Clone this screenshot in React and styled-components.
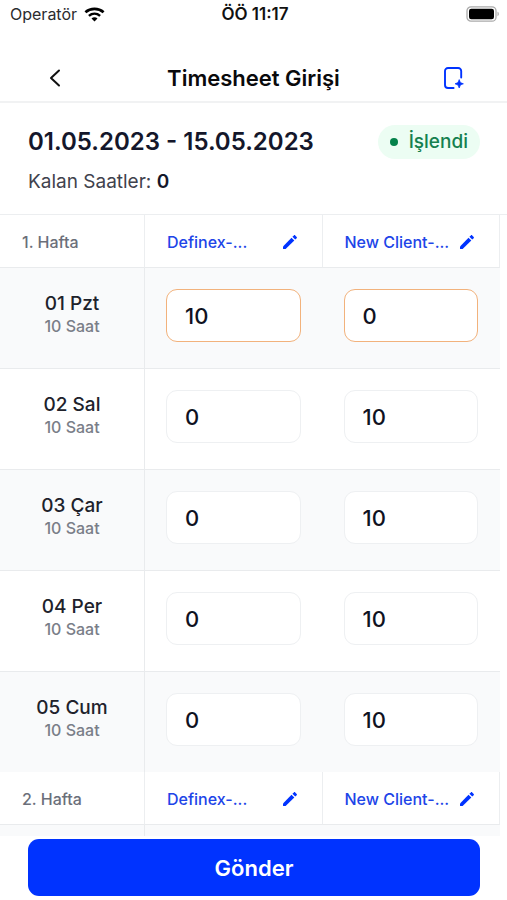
import React, { useState } from "react";
import styled, { createGlobalStyle } from "styled-components";

const GlobalStyle = createGlobalStyle`
  *, *::before, *::after { box-sizing: border-box; }
  body {
    margin: 0;
    background: #fff;
    color: #0f1222;
    font-family: Inter, "Liberation Sans", sans-serif;
  }
  button, input { font: inherit; color: inherit; }
`;

const Screen = styled.div`
  display: flex;
  flex-direction: column;
  min-height: 100vh;
  background: #fff;
`;

const StatusBar = styled.div`
  display: grid;
  grid-template-columns: 1fr auto 1fr;
  align-items: center;
  height: 28px;
  padding: 0 7px 0 10px;
  font-size: 16px;
  line-height: 20px;
  color: #2c2c2e;
`;

const Carrier = styled.span`
  display: flex;
  align-items: center;
  gap: 7px;
`;

const Clock = styled.time`
  font-size: 17px;
  font-weight: 600;
  color: #111;
`;

const Battery = styled.span`
  display: flex;
  justify-content: flex-end;
`;

const NavBar = styled.header`
  display: grid;
  grid-template-columns: 1fr auto 1fr;
  align-items: center;
  height: 75px;
  padding: 27px 42px 0;
  border-bottom: 2px solid #f1f2f3;
`;

const Title = styled.h1`
  margin: 0;
  font-size: 22px;
  line-height: 28px;
  font-weight: 600;
  color: #0a0a0c;
`;

const IconButton = styled.button`
  display: flex;
  justify-self: ${(p) => (p.$end ? "end" : "start")};
  padding: 0;
  border: 0;
  background: none;
  color: ${(p) => (p.$dark ? "#111" : "#0033ff")};
  cursor: pointer;
`;

const Summary = styled.section`
  padding: 22px 27px 21px 28px;
  border-bottom: 1px solid #eceef0;
`;

const SummaryTop = styled.div`
  display: flex;
  align-items: center;
  justify-content: space-between;
`;

const Period = styled.h2`
  margin: 0;
  font-size: 24px;
  line-height: 32px;
  font-weight: 600;
  color: #14172b;
`;

const Status = styled.span`
  display: flex;
  align-items: center;
  gap: 11px;
  height: 34px;
  padding: 0 12px;
  border-radius: 17px;
  background: #ecfdf3;
  color: #15804f;
  font-size: 19px;
  line-height: 24px;
  font-weight: 500;

  &::before {
    content: "";
    width: 8px;
    height: 8px;
    border-radius: 50%;
    background: #05824b;
  }
`;

const Remaining = styled.p`
  margin: 11px 0 0;
  font-size: 19px;
  line-height: 23px;
  color: #3f424d;

  strong { font-weight: 600; color: #14172b; }
`;

const TableArea = styled.main`
  flex: 1;
  padding-right: 7px;
`;

const Table = styled.table`
  width: 100%;
  table-layout: fixed;
  border-collapse: separate;
  border-spacing: 0;
`;

const DayColumn = styled.col`
  width: 145px;
`;

const HeadCell = styled.th`
  height: 53px;
  padding: 1px 22px 0;
  border-right: 1px solid #eceef0;
  border-bottom: 1px solid #e9ebed;
  text-align: left;
  font-size: 16px;
  line-height: 20px;
  font-weight: 500;
  color: #6b6f7a;
`;

const Project = styled.div`
  display: flex;
  align-items: center;
  justify-content: space-between;
  color: #2044e8;
`;

const DayRow = styled.tr`
  background: ${(p) => (p.$shaded ? "#f9fafb" : "#fff")};

  & > * {
    height: ${(p) => (p.$last ? "100px" : "101px")};
    border-bottom: ${(p) => (p.$last ? "0" : "1px solid #e9ebed")};
  }
`;

const DayCell = styled.th`
  padding: 0 0 8px;
  border-right: 1px solid #e9ebed;
  text-align: center;
  font-weight: 400;
`;

const DayName = styled.div`
  font-size: 19px;
  line-height: 24px;
  font-weight: 500;
  color: #20222b;
`;

const DayHours = styled.div`
  font-size: 16px;
  line-height: 20px;
  font-weight: 500;
  color: #7a7e88;
`;

const HoursCell = styled.td`
  padding: 0 22px 5px 21px;
`;

const HoursInput = styled.input`
  display: block;
  width: 100%;
  height: 53px;
  padding: 0 18px;
  border: 1px solid ${(p) => (p.$warn ? "#f2b27c" : "#eef0f2")};
  border-radius: 11px;
  background: #fff;
  font-size: 22px;
  line-height: 28px;
  font-weight: 500;
  outline: none;
`;

const PeekCell = styled.td`
  height: 11px;
  padding: 0;
  background: #f9fafb;
  border-right: ${(p) => (p.$line ? "1px solid #e9ebed" : "0")};
`;

const Footer = styled.footer`
  padding: 3px 27px 4px 28px;
`;

const SubmitButton = styled.button`
  display: block;
  width: 100%;
  height: 57px;
  border: 0;
  border-radius: 11px;
  background: #0033ff;
  color: #fff;
  font-size: 22px;
  line-height: 28px;
  font-weight: 600;
  cursor: pointer;
`;

const projects = ["Definex-...", "New Client-..."];

const days = [
  { name: "01 Pzt", hours: ["10", "0"], warn: true },
  { name: "02 Sal", hours: ["0", "10"] },
  { name: "03 Çar", hours: ["0", "10"] },
  { name: "04 Per", hours: ["0", "10"] },
  { name: "05 Cum", hours: ["0", "10"] },
];

function WifiIcon() {
  return (
    <svg width="21" height="15" viewBox="0 0 21 15" fill="none" aria-hidden="true">
      <path d="M1.400 5.300C6.500.8 14.500.8 19.600 5.300" stroke="#000" strokeWidth="2.700" />
      <path d="M4.900 8.900C8.200 6.100 12.800 6.100 16.100 8.900" stroke="#000" strokeWidth="2.500" />
      <path d="M7.500 11.500c1.700-1.600 4.300-1.600 6 0l-3 2.900z" fill="#000" />
    </svg>
  );
}

function BatteryIcon() {
  return (
    <svg width="34" height="16" viewBox="0 0 34 16" aria-hidden="true">
      <rect x="1" y="0.8" width="29" height="14.4" rx="4" fill="#fff" stroke="#aaa" strokeWidth="1.3" />
      <rect x="3" y="2.8" width="25" height="10.4" rx="2.3" fill="#000" />
      <path d="M31.500 5.800c1.800.5 1.800 3.900 0 4.400z" fill="#aaa" />
    </svg>
  );
}

function BackIcon() {
  return (
    <svg width="26" height="26" viewBox="0 0 26 26" fill="none" aria-hidden="true">
      <path d="M17 5.500 9 13l8 7.500" stroke="currentColor" strokeWidth="2" strokeLinecap="round" strokeLinejoin="round" />
    </svg>
  );
}

function AddDocumentIcon() {
  return (
    <svg width="24" height="26" viewBox="0 0 24 26" fill="none" stroke="currentColor" aria-hidden="true">
      <path d="M20.200 12.500V6a3 3 0 0 0-3-3h-10.200a3 3 0 0 0-3 3v14a3 3 0 0 0 3 3h5.600" strokeWidth="1.900" strokeLinecap="round" />
      <path d="M18.200 14.600l1.200 3 3 1.200-3 1.200-1.200 3-1.200-3-3-1.200 3-1.200z" fill="currentColor" strokeWidth="0.700" strokeLinejoin="round" />
    </svg>
  );
}

function PencilIcon() {
  return (
    <svg width="20" height="20" viewBox="0 0 20 20" fill="currentColor" aria-hidden="true">
      <path d="M3 14.400v2c0 .4.200.6.600.6h2L14.300 8.500l-2.800-2.800z" />
      <path d="M12.400 4.800l2.800 2.800 1.500-1.400c.4-.4.4-.9 0-1.300l-1.500-1.500c-.4-.4-.9-.4-1.300 0z" />
    </svg>
  );
}

function WeekHeader({ label }) {
  return (
    <tr>
      <HeadCell scope="col">{label}</HeadCell>
      {projects.map((project) => (
        <HeadCell key={project} scope="col">
          <Project>
            <span>{project}</span>
            <IconButton type="button" aria-label={`${project} düzenle`}>
              <PencilIcon />
            </IconButton>
          </Project>
        </HeadCell>
      ))}
    </tr>
  );
}

function TimesheetDay({ day, shaded, last }) {
  const [hours, setHours] = useState(day.hours);
  const change = (index, value) =>
    setHours(hours.map((h, i) => (i === index ? value : h)));

  return (
    <DayRow $shaded={shaded} $last={last}>
      <DayCell scope="row">
        <DayName>{day.name}</DayName>
        <DayHours>10 Saat</DayHours>
      </DayCell>
      {projects.map((project, i) => (
        <HoursCell key={project}>
          <HoursInput
            type="text"
            inputMode="numeric"
            aria-label={`${day.name} ${project}`}
            $warn={day.warn}
            value={hours[i]}
            onChange={(e) => change(i, e.target.value)}
          />
        </HoursCell>
      ))}
    </DayRow>
  );
}

export default function App() {
  return (
    <Screen>
      <GlobalStyle />
      <StatusBar>
        <Carrier>
          Operatör
          <WifiIcon />
        </Carrier>
        <Clock>ÖÖ 11:17</Clock>
        <Battery>
          <BatteryIcon />
        </Battery>
      </StatusBar>
      <NavBar>
        <IconButton type="button" $dark aria-label="Geri">
          <BackIcon />
        </IconButton>
        <Title>Timesheet Girişi</Title>
        <IconButton type="button" $end aria-label="Ekle">
          <AddDocumentIcon />
        </IconButton>
      </NavBar>
      <Summary>
        <SummaryTop>
          <Period>01.05.2023 - 15.05.2023</Period>
          <Status>İşlendi</Status>
        </SummaryTop>
        <Remaining>
          Kalan Saatler: <strong>0</strong>
        </Remaining>
      </Summary>
      <TableArea>
        <Table>
          <colgroup>
            <DayColumn />
            <col />
            <col />
          </colgroup>
          <tbody>
            <WeekHeader label="1. Hafta" />
            {days.map((day, i) => (
              <TimesheetDay
                key={day.name}
                day={day}
                shaded={i % 2 === 0}
                last={i === days.length - 1}
              />
            ))}
          </tbody>
          <tbody>
            <WeekHeader label="2. Hafta" />
            <tr>
              <PeekCell $line />
              <PeekCell colSpan={2} />
            </tr>
          </tbody>
        </Table>
      </TableArea>
      <Footer>
        <SubmitButton type="button">Gönder</SubmitButton>
      </Footer>
    </Screen>
  );
}
